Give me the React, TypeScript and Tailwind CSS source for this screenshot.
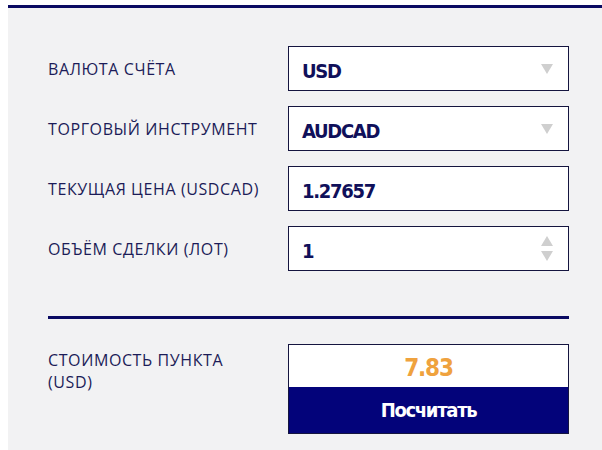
import React from "react";

const labelFont = { fontFamily: '"Open Sans", "Lato", sans-serif' };
const valueFont = { fontFamily: '"DejaVu Sans Condensed", "DejaVu Sans", sans-serif' };

const rows = [
  { label: "ВАЛЮТА СЧЁТА", value: "USD", kind: "select" },
  { label: "ТОРГОВЫЙ ИНСТРУМЕНТ", value: "AUDCAD", kind: "select" },
  { label: "ТЕКУЩАЯ ЦЕНА (USDCAD)", value: "1.27657", kind: "text" },
  { label: "ОБЪЁМ СДЕЛКИ (ЛОТ)", value: "1", kind: "number" },
];

const Arrow = ({ up = false }: { up?: boolean }) => (
  <svg width="12" height="12" viewBox="0 0 12 12">
    <polygon points={up ? "6,1 12,11 0,11" : "0,1 12,1 6,11"} fill="#cfcfcf" />
  </svg>
);

export default function App() {
  return (
    <div className="min-h-[450px] bg-white pl-2 pt-[5px]">
      <div className="min-h-[445px] border-t-[3px] border-[#0a0a62] bg-[#f2f2f3] pl-10 pt-[38px] pb-4">
        {/* fields */}
        <div className="flex flex-col gap-[15px]">
          {rows.map((row) => (
            <div key={row.label} className="flex items-center">
              <div
                className="w-[240px] text-[16px] tracking-[0.6px] text-[#1c1c58]"
                style={labelFont}
              >
                {row.label}
              </div>
              <div className="flex h-[45px] w-[281px] items-center justify-between border border-[#15153f] bg-white pl-[13px] pr-[15px]">
                <span
                  className="pt-[4px] text-[20px] font-bold font-stretch-condensed tracking-[-1.3px] text-[#10105a]"
                  style={valueFont}
                >
                  {row.value}
                </span>
                {row.kind === "select" && <Arrow />}
                {row.kind === "number" && (
                  <div className="flex flex-col gap-[3px]">
                    <Arrow up />
                    <Arrow />
                  </div>
                )}
              </div>
            </div>
          ))}
        </div>

        {/* divider */}
        <div className="mt-[45px] h-[3px] w-[521px] bg-[#0a0a62]" />

        {/* result */}
        <div className="mt-[25px] flex items-start">
          <div
            className="w-[240px] pt-[5px] text-[16px] leading-[22px] tracking-[0.6px] text-[#1c1c58]"
            style={labelFont}
          >
            СТОИМОСТЬ ПУНКТА
            <br />
            (USD)
          </div>
          <div className="w-[281px] border border-[#15153f]">
            <div
              className="flex h-[42px] items-center justify-center bg-white pt-[3px] text-[24px] font-bold font-stretch-condensed tracking-[-1.2px] text-[#efa23e]"
              style={valueFont}
            >
              7.83
            </div>
            <button
              className="flex h-[46px] w-full items-center justify-center bg-[#03037a] text-[20px] font-bold font-stretch-condensed tracking-[-1.3px] text-white"
              style={valueFont}
            >
              Посчитать
            </button>
          </div>
        </div>
      </div>
    </div>
  );
}
